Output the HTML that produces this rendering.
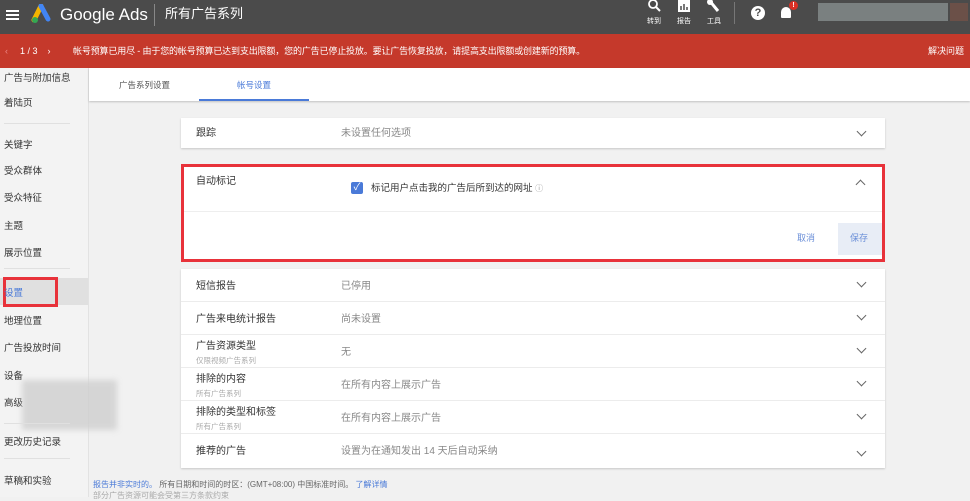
<!DOCTYPE html>
<html><head><meta charset="utf-8"><style>
*{margin:0;padding:0;box-sizing:border-box;line-height:1.2}
body{width:970px;height:497px;overflow:hidden;background:#f1f1f1;font-family:"Liberation Sans","Noto Sans CJK SC",sans-serif;position:relative;font-size:10px;color:#333}
.abs{position:absolute}
#hdr{left:0;top:0;width:970px;height:34px;background:#4b4b4b;color:#fff}
#ban{left:0;top:34px;width:970px;height:34px;background:#c5392b;color:#fff;font-size:9px}
#side{left:0;top:68px;width:89px;height:429px;background:#f3f3f3;border-right:1px solid #e2e2e2}
.si{position:absolute;left:4px;font-size:9.5px;color:#333;margin-top:2px}
.dv{position:absolute;left:4px;width:66px;height:1px;background:#e0e0e0}
#tabs{left:89px;top:68px;width:881px;height:33px;background:#fff;box-shadow:0 1px 2px rgba(0,0,0,.2)}
.card{position:absolute;left:181px;width:704px;background:#fff;box-shadow:0 1px 2px rgba(0,0,0,.18)}
.row{position:absolute;left:0;width:704px;height:33px;border-bottom:1px solid #ececec}
.row .t{position:absolute;left:15px;top:12px;font-size:10px;color:#333}
.row .s{position:absolute;left:15px;top:21px;font-size:7.5px;color:#aaa}
.row .v{position:absolute;left:160px;top:12px;font-size:10px;color:#888}
.chev{position:absolute;right:20px;top:10px;width:7px;height:7px;border-right:1.5px solid #666;border-bottom:1.5px solid #666;transform:rotate(45deg)}
</style></head><body>
<div id="hdr" class="abs">
 <div class="abs" style="left:6px;top:10px;width:13px;height:2px;background:#fff;box-shadow:0 4px 0 #fff,0 8px 0 #fff"></div>
 <svg class="abs" style="left:30px;top:4px" width="22" height="20"><path d="M11 2 L4 16" stroke="#f4b400" stroke-width="5" stroke-linecap="round"/><path d="M11 2 L18 15" stroke="#4285f4" stroke-width="5" stroke-linecap="round"/><circle cx="5" cy="16" r="3" fill="#34a853"/></svg>
 <div class="abs" style="left:60px;top:5px;font-size:17px">Google Ads</div>
 <div class="abs" style="left:154px;top:4px;width:1px;height:22px;background:#888"></div>
 <div class="abs" style="left:165px;top:6px;font-size:13px">所有广告系列</div>
 <svg class="abs" style="left:647px;top:0" width="14" height="13"><circle cx="6" cy="4" r="4" fill="none" stroke="#fff" stroke-width="1.8"/><path d="M9 7 L13 11" stroke="#fff" stroke-width="2"/></svg>
 <svg class="abs" style="left:677px;top:0" width="14" height="13"><rect x="1" y="0" width="12" height="12" fill="#fff"/><path d="M4 10V6M7 10V4M10 10V7" stroke="#4b4b4b" stroke-width="1.5"/></svg>
 <svg class="abs" style="left:707px;top:0" width="14" height="13"><path d="M2 0 L11 11" stroke="#fff" stroke-width="3"/><circle cx="3" cy="2" r="3" fill="#fff"/></svg>
 <div class="abs" style="left:645px;top:18px;font-size:7px;width:18px;text-align:center">转到</div>
 <div class="abs" style="left:675px;top:18px;font-size:7px;width:18px;text-align:center">报告</div>
 <div class="abs" style="left:705px;top:18px;font-size:7px;width:18px;text-align:center">工具</div>
 <div class="abs" style="left:734px;top:2px;width:1px;height:22px;background:#777"></div>
 <div class="abs" style="left:751px;top:6px;width:14px;height:14px;border-radius:50%;background:#fff;color:#4b4b4b;font-size:11px;font-weight:bold;text-align:center;line-height:14px">?</div>
 <div class="abs" style="left:781px;top:7px;width:10px;height:11px;background:#fff;border-radius:5px 5px 1px 1px"></div>
 <div class="abs" style="left:789px;top:1px;width:9px;height:9px;border-radius:50%;background:#d93025;color:#fff;font-size:7px;text-align:center;line-height:9px;font-weight:bold">!</div>
 <div class="abs" style="left:818px;top:3px;width:130px;height:18px;background:#9aa3a3;opacity:.6"></div>
 <div class="abs" style="left:950px;top:3px;width:18px;height:18px;background:#6b5048"></div>
</div>
<div id="ban" class="abs">
 <div class="abs" style="left:5px;top:12px;color:#e88">‹</div>
 <div class="abs" style="left:20px;top:12px">1 / 3 &nbsp;&nbsp;&nbsp;›</div>
 <div class="abs" style="left:73px;top:12px;white-space:nowrap;letter-spacing:-.15px">帐号预算已用尽 - 由于您的帐号预算已达到支出限额，您的广告已停止投放。要让广告恢复投放，请提高支出限额或创建新的预算。</div>
 <div class="abs" style="left:928px;top:12px">解决问题</div>
</div>
<div id="side" class="abs">
 <div class="si" style="top:3px">广告与附加信息</div>
 <div class="si" style="top:28px">着陆页</div>
 <div class="dv" style="top:55px"></div>
 <div class="si" style="top:70px">关键字</div>
 <div class="si" style="top:96px">受众群体</div>
 <div class="si" style="top:123px">受众特征</div>
 <div class="si" style="top:151px">主题</div>
 <div class="si" style="top:178px">展示位置</div>
 <div class="dv" style="top:200px"></div>
 <div class="abs" style="left:0;top:210px;width:88px;height:27px;background:#e0e0e0"></div>
 <div class="abs" style="left:3px;top:209px;width:55px;height:30px;border:3px solid #e8323a"></div>
 <div class="si" style="top:218px;color:#4a7ad8">设置</div>
 <div class="si" style="top:246px">地理位置</div>
 <div class="si" style="top:273px">广告投放时间</div>
 <div class="si" style="top:301px">设备</div>
 <div class="si" style="top:328px">高级</div>
 <div class="abs" style="left:22px;top:312px;width:95px;height:50px;background:#cfcfcf;opacity:.8;filter:blur(3px)"></div>
 <div class="dv" style="top:355px"></div>
 <div class="si" style="top:367px">更改历史记录</div>
 <div class="dv" style="top:390px"></div>
 <div class="si" style="top:406px">草稿和实验</div>
</div>
<div id="tabs" class="abs">
 <div class="abs" style="left:30px;top:12px;font-size:8.5px;color:#555">广告系列设置</div>
 <div class="abs" style="left:148px;top:12px;font-size:8.5px;color:#4a7ad8">帐号设置</div>
 <div class="abs" style="left:110px;top:31px;width:110px;height:2px;background:#4a7ad8"></div>
</div>
<div class="card" style="top:118px;height:30px">
 <div class="row" style="height:30px;border:none"><div class="t" style="top:10px">跟踪</div><div class="v" style="top:10px">未设置任何选项</div><div class="chev"></div></div>
</div>
<div class="card" style="top:164px;height:98px;border:3px solid #e8323a;box-shadow:none">
 <div class="abs" style="left:12px;top:9px;font-size:10px">自动标记</div>
 <div class="abs" style="left:167px;top:15px;width:12px;height:12px;background:#4a7ad8;border-radius:2px;color:#fff;font-size:10px;line-height:12px;text-align:center">✓</div>
 <div class="abs" style="left:187px;top:16px;font-size:9.5px">标记用户点击我的广告后所到达的网址 <span style="color:#999;font-size:8px">ⓘ</span></div>
 <div class="chev" style="transform:rotate(-135deg);top:14px;right:18px"></div>
 <div class="abs" style="left:0;top:44px;width:698px;height:1px;background:#eee"></div>
 <div class="abs" style="left:613px;top:66px;font-size:9px;color:#6b8fd8">取消</div>
 <div class="abs" style="left:654px;top:56px;width:44px;height:32px;background:#e8edf6"></div>
 <div class="abs" style="left:666px;top:66px;font-size:9px;color:#6b8fd8">保存</div>
</div>
<div class="card" style="top:269px;height:199px">
 <div class="row" style="top:0"><div class="t">短信报告</div><div class="v">已停用</div><div class="chev"></div></div>
 <div class="row" style="top:33px"><div class="t">广告来电统计报告</div><div class="v">尚未设置</div><div class="chev"></div></div>
 <div class="row" style="top:66px"><div class="t" style="top:6px">广告资源类型</div><div class="s">仅限视频广告系列</div><div class="v">无</div><div class="chev"></div></div>
 <div class="row" style="top:99px"><div class="t" style="top:6px">排除的内容</div><div class="s">所有广告系列</div><div class="v">在所有内容上展示广告</div><div class="chev"></div></div>
 <div class="row" style="top:132px"><div class="t" style="top:6px">排除的类型和标签</div><div class="s">所有广告系列</div><div class="v">在所有内容上展示广告</div><div class="chev"></div></div>
 <div class="row" style="top:165px;border:none"><div class="t">推荐的广告</div><div class="v">设置为在通知发出 14 天后自动采纳</div><div class="chev" style="top:14px"></div></div>
</div>
<div class="abs" style="left:93px;top:480px;font-size:8px;color:#666;white-space:nowrap"><span style="color:#4a7ad8">报告并非实时的。</span> 所有日期和时间的时区：(GMT+08:00) 中国标准时间。 <span style="color:#4a7ad8">了解详情</span></div>
<div class="abs" style="left:93px;top:491px;font-size:8px;color:#aaa;white-space:nowrap">部分广告资源可能会受第三方条款约束</div>
</body></html>
